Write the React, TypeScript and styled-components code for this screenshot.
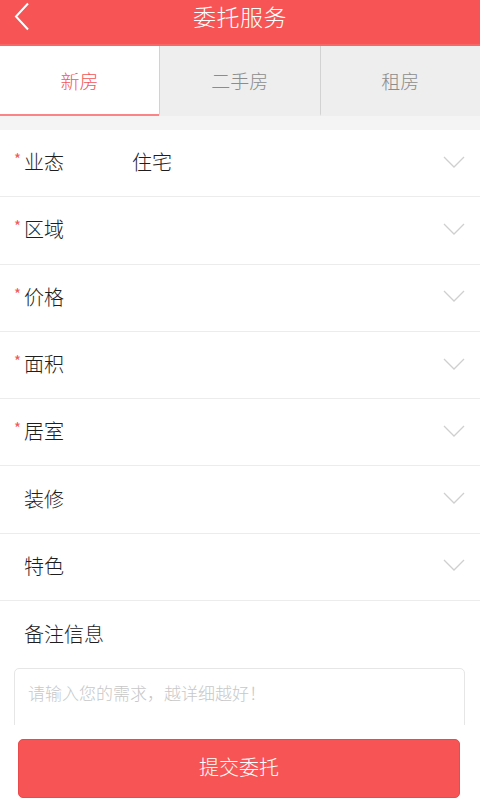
import React from "react";
import styled, { createGlobalStyle } from "styled-components";

const Global = createGlobalStyle`
  html, body { margin: 0; padding: 0; background: #fff; }
  body { font-family: "Noto Sans CJK SC", "Noto Sans", sans-serif; }
  * { box-sizing: border-box; }
`;

const Page = styled.div`
  width: 480px;
  height: 800px;
  display: flex;
  flex-direction: column;
  overflow: hidden;
  background: #fff;
`;

const Header = styled.header`
  height: 46px;
  flex: none;
  background: #f65455;
  display: flex;
  align-items: flex-start;
  justify-content: center;
  position: relative;
  border-bottom: 2px solid #f76768;
`;

const BackButton = styled.button`
  position: absolute;
  left: 10px;
  top: 0;
  width: 24px;
  height: 32px;
  padding: 0;
  border: 0;
  background: transparent;
  display: flex;
  align-items: center;
  justify-content: center;
`;

const Title = styled.h1`
  margin: 2px 0 0;
  font-size: 23px;
  line-height: 28px;
  font-weight: 300;
  color: #fff;
  letter-spacing: 0.5px;
`;

const Tabs = styled.nav`
  height: 70px;
  flex: none;
  display: grid;
  grid-template-columns: 159px 1fr 1fr;
`;

const Tab = styled.div<{ $active?: boolean; $divider?: boolean }>`
  display: flex;
  align-items: center;
  justify-content: center;
  font-size: 19px;
  font-weight: 300;
  background: ${(p) => (p.$active ? "#fff" : "#eeeeee")};
  color: ${(p) => (p.$active ? "#f25657" : "#8c8c8c")};
  border-bottom: 2px solid ${(p) => (p.$active ? "#f98586" : "#eeeeee")};
  border-left: ${(p) => (p.$divider ? "1px solid #d2d2d2" : "0")};
  padding-top: 1px;
`;

const Spacer = styled.div`
  height: 14px;
  flex: none;
  background: #f4f4f4;
`;

const Form = styled.div`
  flex: 1;
  overflow: hidden;
  display: flex;
  flex-direction: column;
`;

const Row = styled.div`
  height: 67.3px;
  flex: none;
  display: flex;
  align-items: center;
  padding: 0 14px 3px 14px;
  border-bottom: 1px solid #ececec;
`;

const Star = styled.span<{ $show: boolean }>`
  width: 10px;
  flex: none;
  color: #f25657;
  font-size: 15px;
  align-self: center;
  margin-top: -6px;
  visibility: ${(p) => (p.$show ? "visible" : "hidden")};
`;

const Label = styled.span`
  width: 108px;
  flex: none;
  font-size: 20px;
  font-weight: 300;
  color: #1e1e1e;
`;

const Value = styled.span`
  flex: 1;
  font-size: 20px;
  font-weight: 300;
  color: #1e1e1e;
`;

const Chevron = styled.svg`
  width: 22px;
  height: 12px;
  flex: none;
  margin-right: 1px;
`;

const RemarkLabel = styled.div`
  height: 67px;
  flex: none;
  display: flex;
  align-items: center;
  padding-left: 24px;
  padding-bottom: 2px;
  font-size: 20px;
  font-weight: 300;
  color: #1e1e1e;
`;

const TextArea = styled.textarea`
  flex: none;
  margin: 0 15px 0 14px;
  height: 110px;
  border: 1px solid #e6e6e6;
  border-radius: 5px;
  padding: 11px 13px;
  resize: none;
  font-family: "Noto Sans CJK SC", "Noto Sans", sans-serif;
  font-size: 17px;
  font-weight: 300;
  color: #333;
  outline: none;
  &::placeholder {
    color: #c8c8c8;
  }
`;

const Footer = styled.footer`
  flex: none;
  padding: 14px 20px 2px 18px;
  background: #fff;
`;

const SubmitButton = styled.button`
  width: 100%;
  height: 59px;
  border: 1px solid #e94a4b;
  border-radius: 5px;
  background: #f65455;
  color: #fff;
  font-family: "Noto Sans CJK SC", "Noto Sans", sans-serif;
  font-size: 20px;
  font-weight: 300;
  padding: 0 0 4px;
`;

const fields = [
  { label: "业态", value: "住宅", required: true },
  { label: "区域", value: "", required: true },
  { label: "价格", value: "", required: true },
  { label: "面积", value: "", required: true },
  { label: "居室", value: "", required: true },
  { label: "装修", value: "", required: false },
  { label: "特色", value: "", required: false },
];

export default function App() {
  return (
    <Page>
      <Global />
      <Header>
        <BackButton aria-label="返回">
          <svg width="18" height="30" viewBox="0 0 18 30">
            <polyline
              points="15,2.5 3,15.5 15,28.5"
              fill="none"
              stroke="#fff"
              strokeWidth="2"
              strokeLinejoin="miter"
            />
          </svg>
        </BackButton>
        <Title>委托服务</Title>
      </Header>
      <Tabs>
        <Tab $active>新房</Tab>
        <Tab $divider>二手房</Tab>
        <Tab $divider>租房</Tab>
      </Tabs>
      <Spacer />
      <Form>
        {fields.map((f) => (
          <Row key={f.label}>
            <Star $show={f.required}>*</Star>
            <Label>{f.label}</Label>
            <Value>{f.value}</Value>
            <Chevron viewBox="0 0 22 12">
              <polyline
                points="1,1 11,11 21,1"
                fill="none"
                stroke="#cfcfcf"
                strokeWidth="1.3"
              />
            </Chevron>
          </Row>
        ))}
        <RemarkLabel>备注信息</RemarkLabel>
        <TextArea placeholder="请输入您的需求，越详细越好！" />
      </Form>
      <Footer>
        <SubmitButton>提交委托</SubmitButton>
      </Footer>
    </Page>
  );
}
